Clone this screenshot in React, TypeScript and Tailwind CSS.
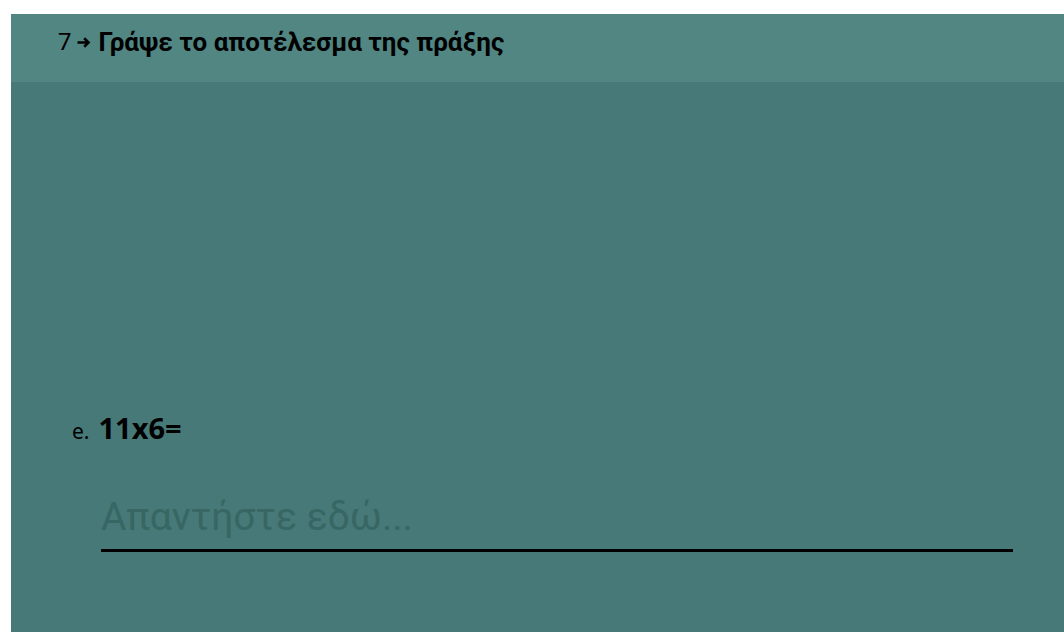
import React from "react";

const roboto = "Roboto, 'Noto Sans', sans-serif";
const noto = "'Noto Sans', 'Open Sans', sans-serif";

function ArrowRight() {
  return (
    <svg width="14" height="11" viewBox="0 0 14 11" className="block">
      <path
        d="M0.5 5.5h11M7.2 1.3l4.3 4.2-4.3 4.2"
        fill="none"
        stroke="#000"
        strokeWidth="2.6"
        strokeLinecap="butt"
        strokeLinejoin="miter"
      />
    </svg>
  );
}

export default function App() {
  return (
    <div
      className="w-full h-[632px] bg-white pt-[14px] pl-[11px] flex flex-col overflow-hidden"
      style={{ fontFamily: roboto }}
    >
      {/* question header */}
      <div className="h-[68px] shrink-0 bg-[#518683] flex items-center pl-[47px] pb-[12px]">
        <span className="text-[24px] leading-none text-black">7</span>
        <span className="ml-[5px] mt-[1px]">
          <ArrowRight />
        </span>
        <span className="text-[26px] font-bold leading-none text-black ml-[8px]">
          Γράψε το αποτέλεσμα της πράξης
        </span>
      </div>

      {/* answer area */}
      <div className="flex-1 bg-[#467977] flex flex-col pl-[61px] pr-[51px] pt-[331px]">
        <div className="flex items-baseline h-[29px]" style={{ fontFamily: noto }}>
          <span className="text-[21px] text-black leading-none">e.</span>
          <span className="text-[29px] font-bold text-black leading-none ml-[9px]">11x6=</span>
        </div>
        <div className="mt-[46px] ml-[29px] pb-[3px] border-b-[3px] border-black">
          <input
            type="text"
            placeholder="Απαντήστε εδώ..."
            className="block w-full h-[58px] bg-transparent outline-none text-[39px] leading-[58px] text-black placeholder:text-[#386663]"
            style={{ fontFamily: roboto }}
          />
        </div>
      </div>
    </div>
  );
}
